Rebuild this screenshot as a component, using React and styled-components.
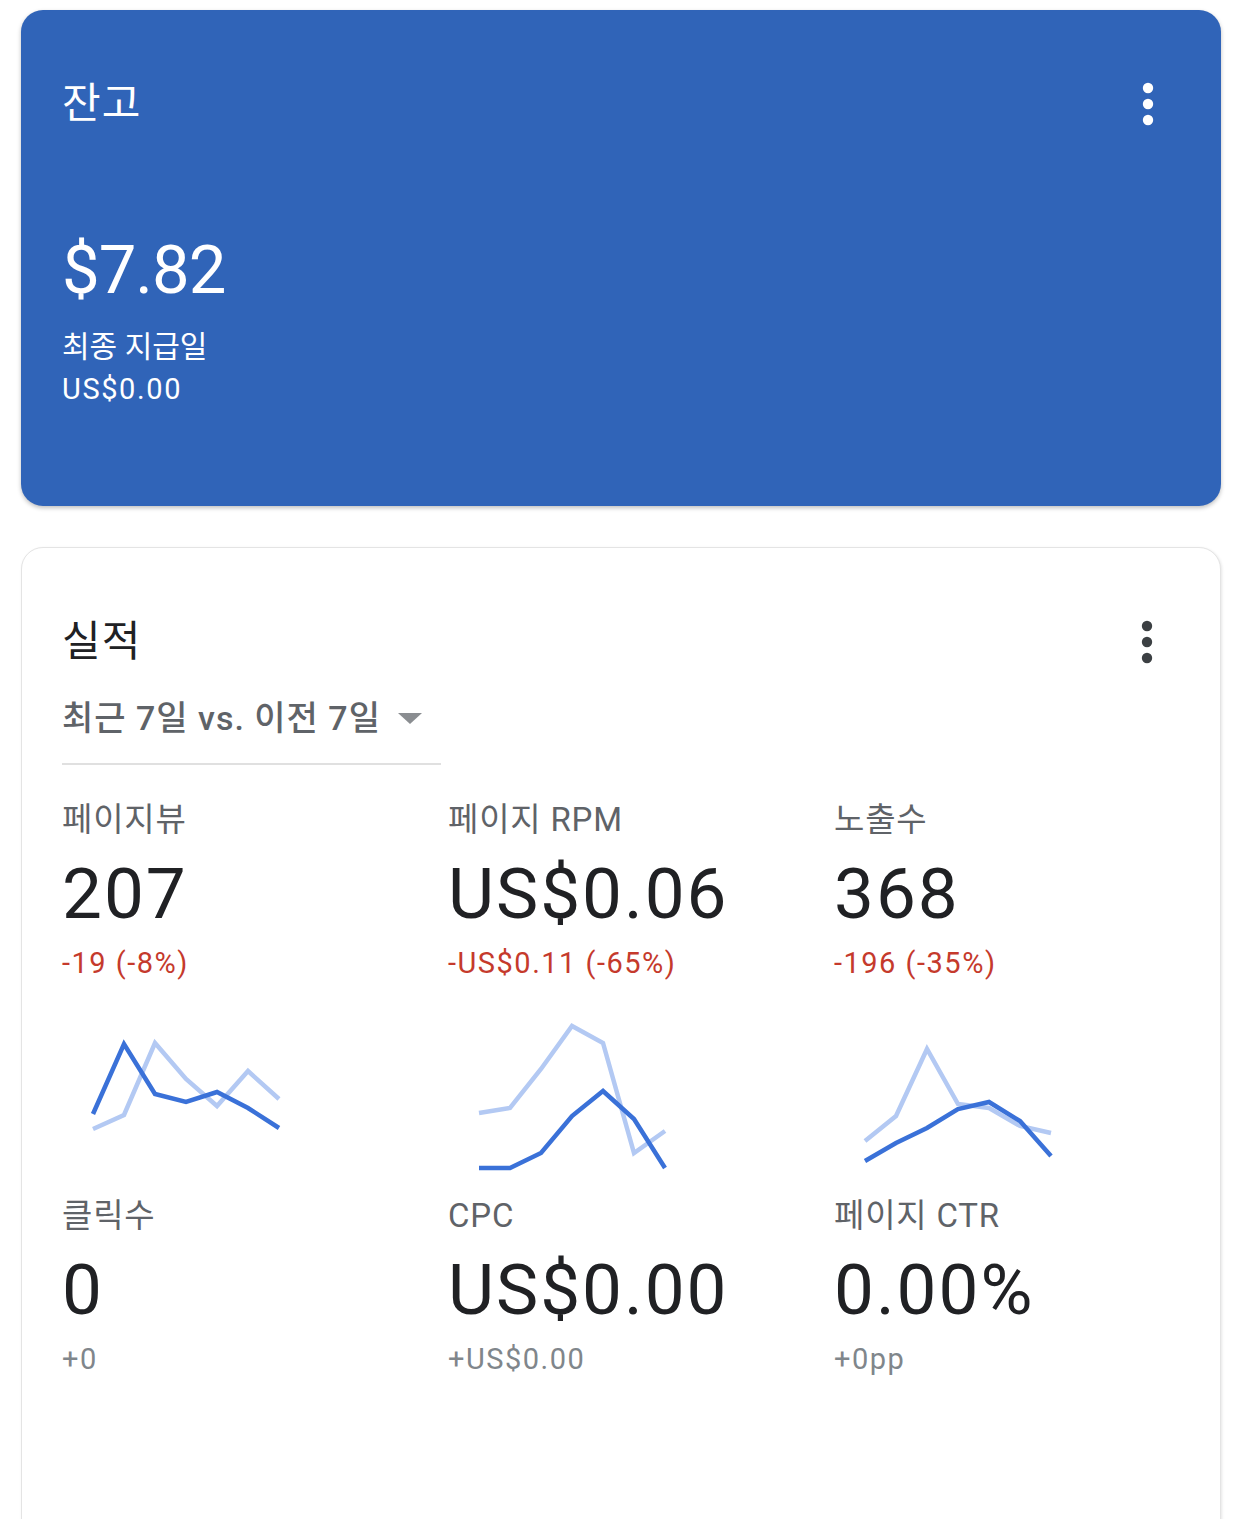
import { createGlobalStyle, styled } from "styled-components"

const GlobalStyle = createGlobalStyle`
    * { box-sizing: border-box; }
    body {
        margin: 0;
        background: #FFFFFF;
        font-family: "Roboto", "Noto Sans CJK KR", sans-serif;
    }
`

const metrics = [
    {
        label: "페이지뷰", value: "207", delta: "-19 (-8%)", trend: "down",
        current: [93, 23, 73, 81, 71, 87, 107],
        previous: [108, 94, 22, 58, 85, 50, 78],
    },
    {
        label: "페이지 RPM", value: "US$0.06", delta: "-US$0.11 (-65%)", trend: "down",
        current: [147, 147, 132, 95, 70, 98, 147],
        previous: [92, 87, 48, 5, 22, 132, 110],
    },
    {
        label: "노출수", value: "368", delta: "-196 (-35%)", trend: "down",
        current: [140, 122, 107, 88, 81, 100, 135],
        previous: [120, 95, 28, 83, 87, 105, 112],
    },
    { label: "클릭수", value: "0", delta: "+0", trend: "flat" },
    { label: "CPC", value: "US$0.00", delta: "+US$0.00", trend: "flat" },
    { label: "페이지 CTR", value: "0.00%", delta: "+0pp", trend: "flat" },
]

const xs = [3, 34, 65, 96, 127, 158, 189]

function toPoints(values){
    return values.map((y, i) => `${xs[i]},${y}`).join(" ")
}

function MoreIcon({ color }){
    return(
        <SCIconButton aria-label="더보기">
            <svg width="64" height="64" viewBox="0 0 24 24" fill={color}>
                <circle cx="12" cy="6" r="1.95" />
                <circle cx="12" cy="12" r="1.95" />
                <circle cx="12" cy="18" r="1.95" />
            </svg>
        </SCIconButton>
    )
}

function Sparkline({ current, previous }){
    return(
        <SCChart>
            {current && (
                <svg width="192" height="150" viewBox="0 0 192 150">
                    <polyline points={toPoints(previous)} fill="none" stroke="#B3C9F3" strokeWidth="4.5" strokeLinejoin="miter" />
                    <polyline points={toPoints(current)} fill="none" stroke="#3A71D8" strokeWidth="4.5" strokeLinejoin="miter" />
                </svg>
            )}
        </SCChart>
    )
}

export default function App(){
    return(
        <SCPage>
            <GlobalStyle />
            <SCBalanceCard>
                <SCCardHeader>
                    <SCTitle>잔고</SCTitle>
                    <MoreIcon color="#FFFFFF" />
                </SCCardHeader>
                <SCBalance>$7.82</SCBalance>
                <SCPayLabel>최종 지급일</SCPayLabel>
                <SCPayValue>US$0.00</SCPayValue>
            </SCBalanceCard>

            <SCPerfCard>
                <SCCardHeader>
                    <SCTitle dark>실적</SCTitle>
                    <MoreIcon color="#3C4043" />
                </SCCardHeader>
                <SCDropdown>
                    <span>최근 7일 vs. 이전 7일</span>
                    <SCArrow />
                </SCDropdown>
                <SCGrid>
                    {metrics.map((m) => (
                        <SCMetric key={m.label}>
                            <SCMetricLabel>{m.label}</SCMetricLabel>
                            <SCMetricValue>{m.value}</SCMetricValue>
                            <SCDelta trend={m.trend}>{m.delta}</SCDelta>
                            <Sparkline current={m.current} previous={m.previous} />
                        </SCMetric>
                    ))}
                </SCGrid>
            </SCPerfCard>
        </SCPage>
    )
}

const SCPage = styled.div`
    padding: 10px 21px 0 21px;
    display: flex;
    flex-direction: column;
    gap: 41px;
`

const SCBalanceCard = styled.div`
    background-color: #3064B8;
    border-radius: 22px;
    padding: 70px 41px 97px 41px;
    box-shadow: 0 2px 4px rgba(0, 0, 0, 0.25);
    color: #FFFFFF;
`

const SCPerfCard = styled.div`
    background-color: #FFFFFF;
    border: 1px solid #E4E4E4;
    border-radius: 22px;
    padding: 70px 41px 100px 40px;
    box-shadow: 1px 1px 3px rgba(0, 0, 0, 0.1);
`

const SCCardHeader = styled.div`
    display: flex;
    justify-content: space-between;
    align-items: center;
    height: 48px;
`

const SCTitle = styled.h2`
    margin: 0;
    font-size: 42px;
    line-height: 48px;
    font-weight: 400;
    letter-spacing: 1px;
    color: ${(p) => (p.dark ? "#202124" : "#FFFFFF")};
`

const SCIconButton = styled.div`
    width: 64px;
    height: 64px;
    display: flex;
    align-items: center;
    justify-content: center;
    svg{ display: block; }
`

const SCBalance = styled.div`
    margin-top: 102px;
    font-size: 67px;
    line-height: 80px;
    font-weight: 400;
    letter-spacing: -1px;
`

const SCPayLabel = styled.div`
    margin-top: 17px;
    font-size: 30px;
    line-height: 40px;
`

const SCPayValue = styled.div`
    margin-top: 2px;
    font-size: 29px;
    line-height: 40px;
    letter-spacing: 1.6px;
`

const SCDropdown = styled.div`
    margin-top: 32px;
    width: 379px;
    display: flex;
    align-items: center;
    justify-content: space-between;
    padding-bottom: 25px;
    border-bottom: 2px solid #E0E0E0;
    span{
        font-size: 34px;
        line-height: 40px;
        font-weight: 500;
        letter-spacing: 1px;
        color: #5F6368;
    }
`

const SCArrow = styled.div`
    width: 0;
    height: 0;
    margin-right: 19px;
    border-left: 12px solid transparent;
    border-right: 12px solid transparent;
    border-top: 11px solid #8A8D91;
`

const SCGrid = styled.div`
    margin-top: 35px;
    display: grid;
    grid-template-columns: repeat(3, 386px);
    row-gap: 25px;
`

const SCMetric = styled.div`
    display: flex;
    flex-direction: column;
`

const SCMetricLabel = styled.div`
    font-size: 33px;
    line-height: 40px;
    letter-spacing: 0.8px;
    color: #5F6368;
`

const SCMetricValue = styled.div`
    margin-top: 16px;
    font-size: 71px;
    line-height: 76px;
    letter-spacing: 2px;
    color: #202124;
`

const SCDelta = styled.div`
    margin-top: 11px;
    font-size: 29px;
    line-height: 40px;
    letter-spacing: 1.5px;
    color: ${(p) => (p.trend === "down" ? "#C53A2C" : "#80868B")};
`

const SCChart = styled.div`
    margin-top: 38px;
    margin-left: 28px;
    width: 192px;
    height: 150px;
    svg{ display: block; }
`
